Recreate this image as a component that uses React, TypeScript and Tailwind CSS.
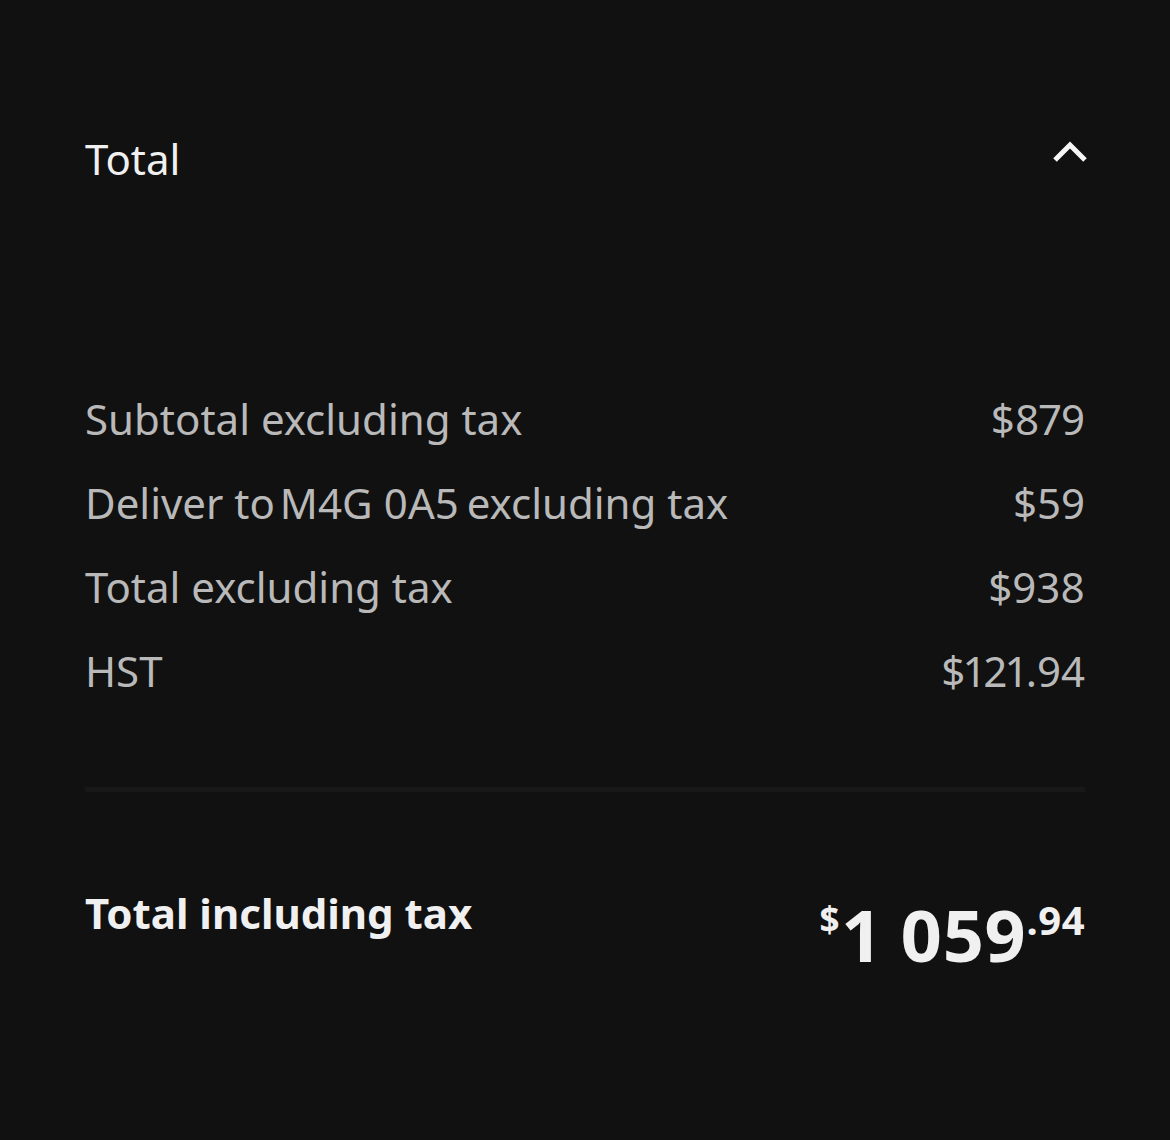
import React from "react";

const rows: [React.ReactNode, string, string][] = [
  ["Subtotal excluding tax", "$879", "a"],
  [
    <>
      Deliver to <span className="ml-[-6px] mr-[-3px]">M4G 0A5</span> excluding tax
    </>,
    "$59",
    "b",
  ],
  ["Total excluding tax", "$938", "c"],
  ["HST", "$121.94", "d"],
];

export default function App() {
  return (
    <div
      className="w-[1170px] h-[1140px] bg-[#111111] px-[85px] proportional-nums"
      style={{ fontFamily: '"Noto Sans", sans-serif' }}
    >
      <div className="flex items-center justify-between pt-[128px] h-[190px]">
        <span className="text-[42px] text-[#f0f0f0] leading-none">Total</span>
        <svg width="36" height="26" viewBox="0 0 36 26" className="mr-[-3px] mt-[-14px]">
          <path d="M3 21 L18 6 L33 21" fill="none" stroke="#f5f5f5" strokeWidth="5" />
        </svg>
      </div>
      <div className="mt-[208px] flex flex-col">
        {rows.map(([l, r, k]) => (
          <div key={k} className="flex justify-between h-[84px] items-start text-[42px] leading-none text-[#b9b9b9]">
            <span>{l}</span>
            <span>{r}</span>
          </div>
        ))}
      </div>
      <div className="mt-[53px] h-[5px] bg-[#181818]" />
      <div className="mt-[100px] flex justify-between items-start">
        <span className="text-[42px] font-bold text-[#f0f0f0] leading-none">Total including tax</span>
        <span className="flex items-start text-[#f0f0f0] font-bold leading-none mt-[6px]">
          <span className="text-[35px] mt-[3px] mr-[5px]">$</span>
          <span className="text-[72px] tracking-[-0.5px]">1 059</span>
          <span className="text-[40px] mt-[2px]">.94</span>
        </span>
      </div>
    </div>
  );
}
